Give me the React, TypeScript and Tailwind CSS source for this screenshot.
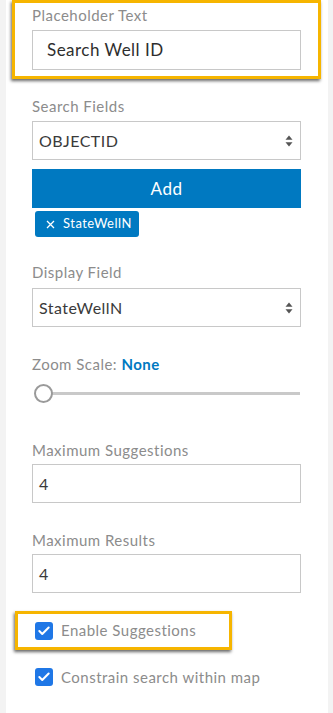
import { Check } from "lucide-react";

const font = { fontFamily: "Lato, 'Open Sans', sans-serif" };

function Label({ children, className = "" }: { children: React.ReactNode; className?: string }) {
  return <div className={`h-[20px] text-[15px] leading-[20px] text-[#8c8c8c] ${className}`}>{children}</div>;
}

function Arrows() {
  return (
    <svg width="8" height="12" viewBox="0 0 8 12" className="absolute right-[7px] top-1/2 -translate-y-1/2">
      <path d="M4 0.5 L7.5 4.8 H0.5 Z" fill="#555" />
      <path d="M4 11.5 L7.5 7.2 H0.5 Z" fill="#555" />
    </svg>
  );
}

function SelectBox({ value, className = "" }: { value: string; className?: string }) {
  return (
    <div className={`relative w-[269px] h-[39px] border border-[#c8c8c8] bg-white flex items-center pl-[6px] text-[16px] text-[#3a3a3a] ${className}`}>
      {value}
      <Arrows />
    </div>
  );
}

function InputBox({ value, className = "" }: { value: string; className?: string }) {
  return (
    <div className={`w-[269px] h-[39px] border border-[#c8c8c8] bg-white flex items-center pl-[6px] text-[16px] text-[#3a3a3a] ${className}`}>
      {value}
    </div>
  );
}

function CheckBox() {
  return (
    <span className="w-[18px] h-[18px] rounded-[3px] bg-[#1f77e6] flex items-center justify-center shrink-0">
      <Check size={14} strokeWidth={3.5} className="text-white" />
    </span>
  );
}

export default function App() {
  return (
    <div className="min-h-[713px] w-[333px] bg-[#f3f3f3] overflow-hidden tracking-[0.03em]" style={font}>
      <div className="ml-[6px] w-[322px] min-h-[713px] bg-white pb-4">
        {/* highlighted placeholder block */}
        <div className="ml-[6px] w-[309px] h-[79px] border-[3px] border-[#f6b500] shadow-[-1px_2px_3px_rgba(0,0,0,0.6)] pl-[17px]">
          <Label className="mt-[2px]">Placeholder Text</Label>
          <div className="mt-[5px] w-[269px] h-[40px] border border-[#c8c8c8] flex items-center pl-[14px] text-[17px] text-[#2e2e2e]">
            Search Well ID
          </div>
        </div>

        <div className="pl-[26px]">
          <Label className="mt-[17px]">Search Fields</Label>
          <SelectBox value="OBJECTID" className="mt-[5px]" />
          <button className="mt-[9px] w-[269px] h-[39px] bg-[#0079c1] text-white text-[17px] tracking-[0.03em] flex items-center justify-center">
            Add
          </button>
          <div className="mt-[3px] ml-[3px] inline-flex items-center h-[26px] rounded-[3px] bg-[#0079c1] text-white text-[13px] pl-[11px] pr-[7px] gap-[8px]">
            <svg width="9" height="9" viewBox="0 0 9 9">
              <path d="M1 1 L8 8 M8 1 L1 8" stroke="white" strokeWidth="1.3" />
            </svg>
            <span>StateWellN</span>
          </div>

          <Label className="mt-[25px]">Display Field</Label>
          <SelectBox value="StateWellN" className="mt-[6px]" />

          <Label className="mt-[27px]">
            Zoom Scale: <span className="font-bold text-[#0079c1]">None</span>
          </Label>
          <div className="mt-[9px] relative w-[268px] h-[20px] flex items-center">
            <div className="ml-[9px] flex-1 h-[3px] bg-[#c9c9c9]" />
            <div className="absolute left-[2px] top-[1px] w-[19px] h-[19px] rounded-full border-2 border-[#9a9a9a] bg-white" />
          </div>

          <Label className="mt-[37px]">Maximum Suggestions</Label>
          <InputBox value="4" className="mt-[4px]" />

          <Label className="mt-[27px]">Maximum Results</Label>
          <InputBox value="4" className="mt-[4px]" />
        </div>

        {/* highlighted checkbox */}
        <div className="mt-[18px] ml-[9px] w-[217px] h-[39px] border-[3px] border-[#f6b500] shadow-[-1px_2px_3px_rgba(0,0,0,0.6)] flex items-center pl-[17px] gap-[8px]">
          <CheckBox />
          <span className="text-[15px] text-[#8c8c8c]">Enable Suggestions</span>
        </div>

        <div className="mt-[17px] ml-[29px] h-[20px] flex items-center gap-[8px]">
          <CheckBox />
          <span className="text-[15px] text-[#8c8c8c]">Constrain search within map</span>
        </div>
      </div>
    </div>
  );
}
